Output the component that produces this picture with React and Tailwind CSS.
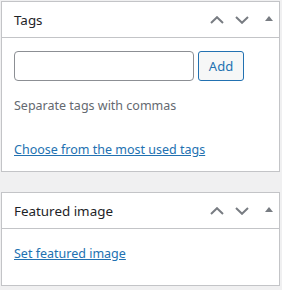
import React from "react";

function Chevron({ up }) {
  return (
    <svg width="14" height="8" viewBox="0 0 14 8" className="block">
      <polyline
        points={up ? "1,7 7,1.2 13,7" : "1,1 7,6.8 13,1"}
        fill="none"
        stroke="#787c82"
        strokeWidth="2"
      />
    </svg>
  );
}

function Triangle() {
  return (
    <svg width="8" height="5" viewBox="0 0 8 5" className="block">
      <polygon points="0,5 4,0 8,5" fill="#787c82" />
    </svg>
  );
}

function Header({ title }) {
  return (
    <div className="flex h-[36px] items-center border-b border-[#c3c4c7] pl-3">
      <h2 className="flex-1 text-[13.4px] font-normal leading-[20px] text-[#1d2327]">{title}</h2>
      <div className="flex items-center pr-[6px]">
        <span className="mt-[1px]"><Chevron up /></span>
        <span className="ml-[11px] mt-[1px]"><Chevron /></span>
        <span className="ml-[16px] -mt-[3px]"><Triangle /></span>
      </div>
    </div>
  );
}

export default function App() {
  return (
    <div
      className="min-h-screen bg-[#f0f0f1] pl-px pt-px"
      style={{ fontFamily: '"Noto Sans", "Open Sans", sans-serif' }}
    >
      <div className="w-[279px] border border-[#c3c4c7] bg-white">
        <Header title="Tags" />
        <div className="px-3 pb-[11px] pt-[13px]">
          <div className="flex gap-1">
            <input
              type="text"
              className="h-[30px] w-[180px] rounded-[4px] border border-[#8c8f94] bg-white px-2 text-[13px] outline-none"
            />
            <button className="h-[30px] w-[46px] rounded-[3px] border border-[#2271b1] bg-[#f6f7f7] text-[13px] leading-[20px] text-[#2271b1]">
              Add
            </button>
          </div>
          <p className="mt-[15px] text-[12.5px] leading-[20px] text-[#646970]">
            Separate tags with commas
          </p>
          <a
            href="#"
            className="mt-[24px] block w-fit text-[12.5px] leading-[20px] text-[#2271b1] underline"
          >
            Choose from the most used tags
          </a>
        </div>
      </div>
      <div className="mt-[20px] w-[279px] border border-[#c3c4c7] bg-white">
        <Header title="Featured image" />
        <div className="px-3 pb-[21px] pt-[15px]">
          <a
            href="#"
            className="block w-fit text-[12.5px] leading-[20px] text-[#2271b1] underline"
          >
            Set featured image
          </a>
        </div>
      </div>
    </div>
  );
}
